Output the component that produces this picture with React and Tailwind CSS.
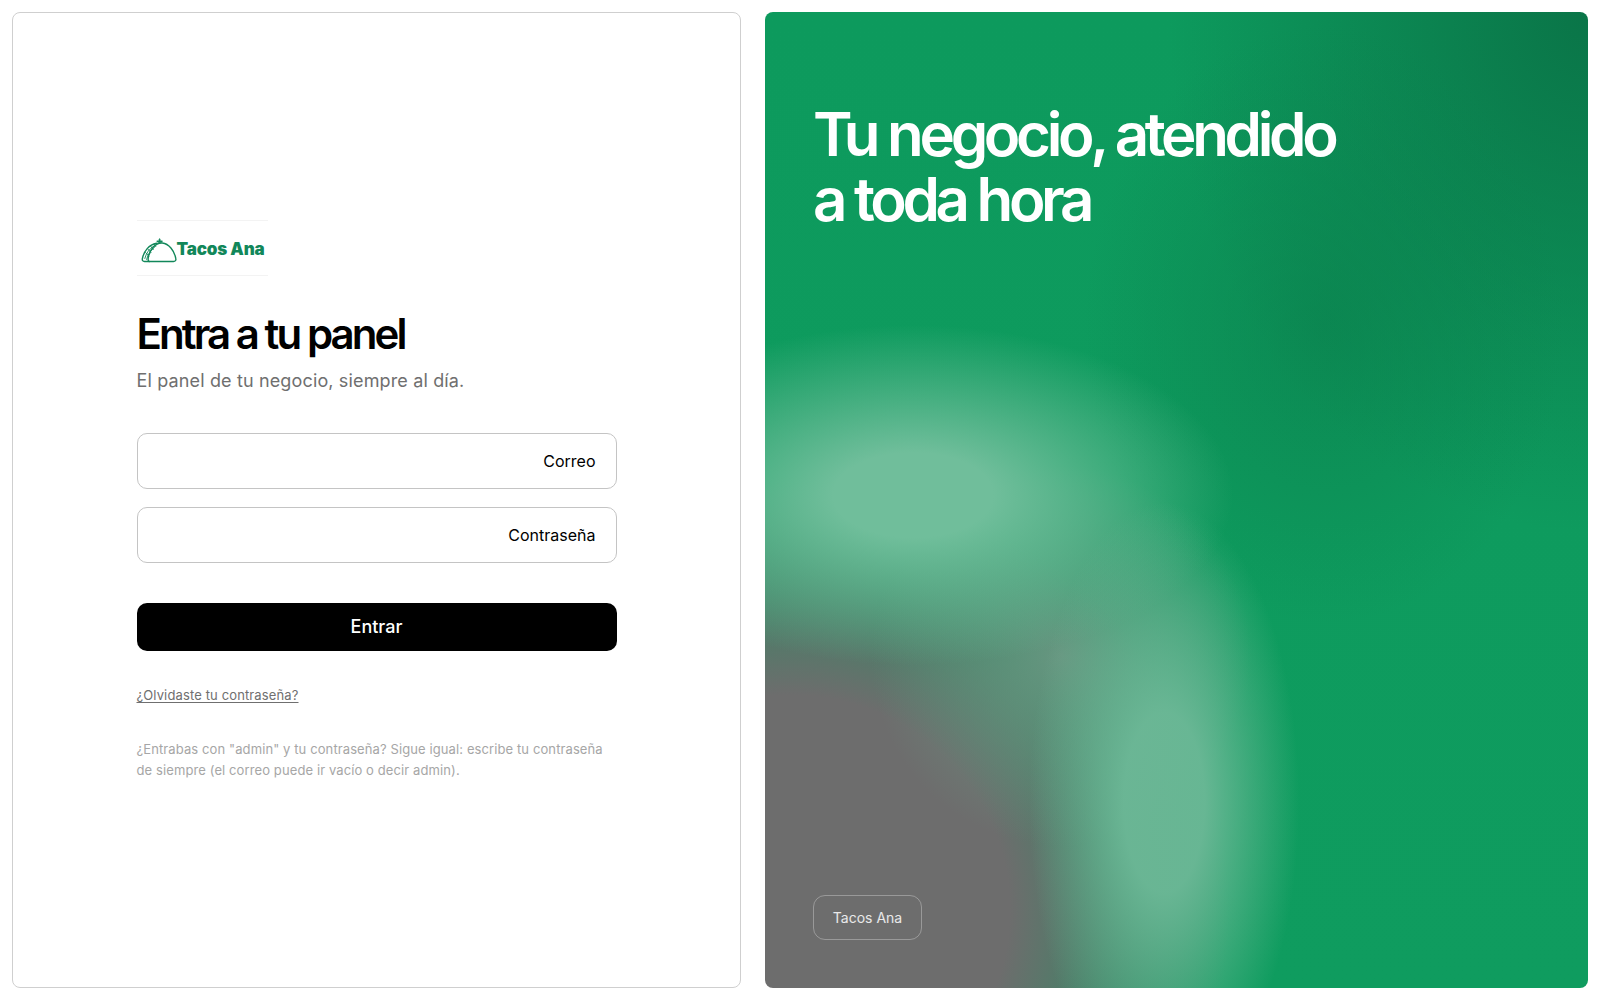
function TacoLogo() {
  return (
    <svg width="36" height="25" viewBox="0 0 36 25" fill="none" stroke="#12875a" strokeWidth="1.4" strokeLinejoin="round" strokeLinecap="round">
      {/* back shell */}
      <path d="M8.500 23.500H3.500C1.800 23.500 1 22.300 1.400 20.500 2.900 13 8 6.800 15.500 5.300" />
      {/* front shell */}
      <path d="M8.500 23.500H32.500C34.300 23.500 35.200 22.300 34.800 20.500 33.300 12.500 27.800 5.700 21.300 5 14.500 4.400 8.800 11.500 7.300 19.500 6.900 22 7.300 23.500 8.500 23.500Z" />
      {/* hatch on the back shell */}
      <path d="M3.800 20.500C5.200 15 8.300 10.800 12.700 8.200M5.600 21.500C6.800 16.500 9.300 12.500 13.500 9.300" strokeWidth="0.9" />
      <path d="M4.500 14.500L7.800 18M6.800 11L10 14.500M9.800 8.300L12.300 11.500M13.200 6.300L14.800 8.600" strokeWidth="0.9" />
      {/* leaf */}
      <path d="M18.500 4.800c-1.500-.2-2.400-.8-2.900-1.800 1-.3 1.600-.1 2.100.2-.1-1 .2-2 .9-2.800.7.800 1 1.800.9 2.800.5-.3 1.100-.5 2.100-.2-.5 1-1.400 1.600-2.900 1.800z" fill="#12875a" strokeWidth="0.5" />
    </svg>
  );
}

export default function App() {
  return (
    <div className="h-screen bg-white p-3 grid grid-cols-[729px_823px] gap-6 font-['Inter',sans-serif]">
      {/* Form side */}
      <div className="border border-[#cfcfcf] rounded-lg flex items-center justify-center">
        <div className="w-[480px]">
          <div className="w-[131px] h-[56px] border-y border-[#f3f3f3] flex items-center pl-1 pt-1">
            <TacoLogo />
            <span className="font-black text-[17px] tracking-[-0.01em] text-[#12875a] whitespace-nowrap">Tacos Ana</span>
          </div>

          <h1 className="mt-8 text-[42px] leading-[52px] font-semibold tracking-[-0.07em] text-black">Entra a tu panel</h1>
          <p className="mt-[7px] text-lg leading-7 tracking-[0.008em] text-[#6f6f6f]">El panel de tu negocio, siempre al día.</p>

          <div className="mt-[38px] flex flex-col gap-[18px]">
            <label className="h-14 border border-[#c4c4c4] rounded-[10px] flex items-center justify-end px-5 text-base text-black">Correo</label>
            <label className="h-14 border border-[#c4c4c4] rounded-[10px] flex items-center justify-end px-5 text-base text-black">Contraseña</label>
          </div>

          <button className="mt-10 w-full h-12 bg-black text-white rounded-[10px] text-lg font-medium">Entrar</button>

          <a className="block mt-[34px] text-[13px] leading-5 tracking-[0.01em] text-[#6f6f6f] underline underline-offset-2">¿Olvidaste tu contraseña?</a>
          <p className="mt-[34px] text-[13px] leading-[20.500px] tracking-[0.008em] text-[#a6a6a6]">
            ¿Entrabas con "admin" y tu contraseña? Sigue igual: escribe tu contraseña de siempre (el correo puede ir vacío o decir admin).
          </p>
        </div>
      </div>

      {/* Hero side */}
      <div className="rounded-lg p-12 flex flex-col justify-between bg-[radial-gradient(ellipse_135px_300px_at_48.500%_81%,rgba(110,185,152,0.92)_30%,rgba(110,185,152,0)),radial-gradient(ellipse_320px_170px_at_18%_49.500%,rgba(112,190,155,1)_25%,rgba(112,190,155,0)),radial-gradient(ellipse_190px_190px_at_36%_66%,rgba(107,150,130,0.95),rgba(107,150,130,0)),radial-gradient(ellipse_440px_430px_at_3%_92%,#6d6d6d_50%,rgba(109,109,109,0)),radial-gradient(ellipse_240px_300px_at_68%_32%,rgba(10,125,75,0.6),rgba(10,125,75,0)),radial-gradient(ellipse_420px_520px_at_100%_0%,#0a7548,rgba(10,117,72,0)),linear-gradient(180deg,#0d9a5d,#0f9c5f)]">
        <h2 className="mt-[42px] text-[60px] leading-[65px] font-semibold tracking-[-0.072em] text-white">Tu negocio, atendido<br />a toda hora</h2>
        <span className="self-start h-[45px] w-[109px] flex items-center justify-center border border-white/30 rounded-xl text-sm text-white/85">Tacos Ana</span>
      </div>
    </div>
  );
}
